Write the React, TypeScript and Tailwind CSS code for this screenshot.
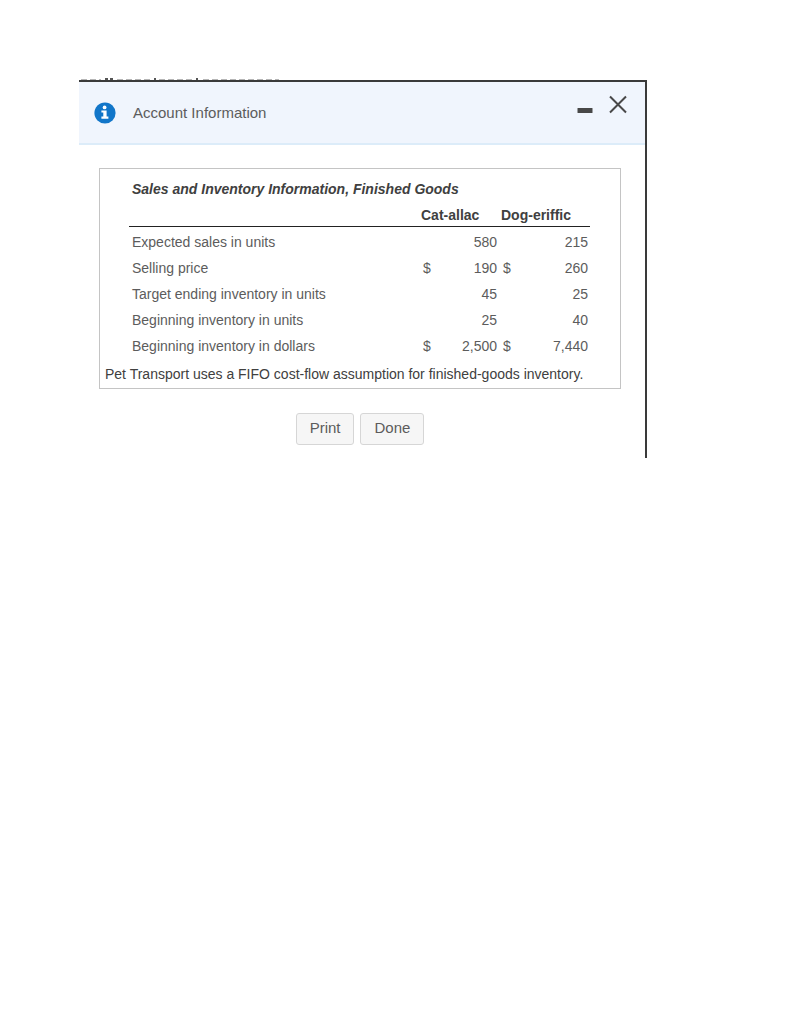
import { ReactNode } from 'react';

interface InventoryRow {
  label: string;
  cat: string;
  dog: string;
  currency?: boolean;
}

const rows: InventoryRow[] = [
  { label: 'Expected sales in units', cat: '580', dog: '215' },
  { label: 'Selling price', cat: '190', dog: '260', currency: true },
  { label: 'Target ending inventory in units', cat: '45', dog: '25' },
  { label: 'Beginning inventory in units', cat: '25', dog: '40' },
  { label: 'Beginning inventory in dollars', cat: '2,500', dog: '7,440', currency: true },
];

function InfoIcon() {
  return (
    <svg viewBox="0 0 22 22" className="h-[22px] w-[22px] shrink-0" aria-hidden="true">
      <circle cx="11" cy="11" r="10.6" fill="#1276c9" />
      <circle cx="10.6" cy="5.4" r="1.9" fill="#fff" />
      <path d="M7.4 8.4h5.2v6.2h1.8v2.2H7.4v-2.2h1.9v-4H7.4z" fill="#fff" />
    </svg>
  );
}

// Sliver of the page content that the dialog cuts off
function CutOffLine() {
  return (
    <svg viewBox="0 0 202 2" className="block h-0.5 w-[202px]" aria-hidden="true">
      <path d="M2 1.5h20M38 1.5h34M80 1.5h34M124 1.5h76" stroke="#b5b5b5" strokeDasharray="6 3" />
      <path d="M26 1h3M31 1h3M75 1h2M117 1h2" stroke="#555" strokeWidth="2" />
    </svg>
  );
}

function ActionButton({ children }: { children: ReactNode }) {
  return (
    <button
      type="button"
      className="h-8 rounded-[3px] border border-[#d6d6d6] bg-[#f6f6f6] px-[13px] text-[15px] text-[#5c5c5c]"
    >
      {children}
    </button>
  );
}

export default function App() {
  return (
    <main className="bg-white pt-[78px] pr-36 pl-[79px] font-['Liberation_Sans',Arial,sans-serif] text-[14px]">
      <CutOffLine />
      <section className="border-t-2 border-r-2 border-[#3a3a3a] pb-[13px]">
        <header className="flex h-[63px] items-center border-b-2 border-[#dcecf9] bg-[#f0f5fd] pr-[17px] pl-[15px]">
          <InfoIcon />
          <h1 className="ml-[17px] flex-1 pt-0.5 text-[15px] text-[#5c5c5c]">Account Information</h1>
          <div className="mb-4 flex items-center gap-[15px]">
            <button type="button" aria-label="Minimize">
              <svg viewBox="0 0 16 20" className="h-5 w-4">
                <rect x="0.5" y="13" width="15" height="5" rx="0.5" fill="#484848" />
              </svg>
            </button>
            <button type="button" aria-label="Close">
              <svg viewBox="0 0 20 20" className="h-5 w-5">
                <path d="M2 1.5l16 16M18 1.5l-16 16" fill="none" stroke="#484848" strokeWidth="2" />
              </svg>
            </button>
          </div>
        </header>

        <div className="mt-[23px] mr-6 ml-5 border border-[#c4c4c4] pt-[7px]">
          <div className="pr-[30px] pl-[29px]">
            <table className="w-full table-fixed border-collapse text-[#5c5c5c]">
              <caption className="h-[26px] pl-[3px] text-left leading-[26px] font-bold text-[#404040] italic">
                Sales and Inventory Information, Finished Goods
              </caption>
              <colgroup>
                <col />
                <col className="w-5" />
                <col className="w-[60px]" />
                <col className="w-5" />
                <col className="w-[71px]" />
              </colgroup>
              <thead>
                <tr className="h-6 border-b border-[#222] text-left align-bottom text-[#404040]">
                  <td />
                  <th colSpan={2} scope="colgroup" className="pl-0.5">Cat-allac</th>
                  <th colSpan={2} scope="colgroup" className="pl-0.5">Dog-eriffic</th>
                </tr>
              </thead>
              <tbody className="before:block before:h-[3px]">
                {rows.map((row) => (
                  <tr key={row.label} className="h-[26px]">
                    <th scope="row" className="pl-[3px] text-left font-normal">{row.label}</th>
                    <td className="pl-1">{row.currency && '$'}</td>
                    <td className="pr-0.5 text-right">{row.cat}</td>
                    <td className="pl-1">{row.currency && '$'}</td>
                    <td className="pr-0.5 text-right">{row.dog}</td>
                  </tr>
                ))}
              </tbody>
            </table>
          </div>
          <p className="h-7 pl-[5px] leading-7 text-[#404040]">
            Pet Transport uses a FIFO cost-flow assumption for finished-goods inventory.
          </p>
        </div>

        <div className="mt-6 flex justify-center gap-1.5 pr-1">
          <ActionButton>Print</ActionButton>
          <ActionButton>Done</ActionButton>
        </div>
      </section>
    </main>
  );
}
